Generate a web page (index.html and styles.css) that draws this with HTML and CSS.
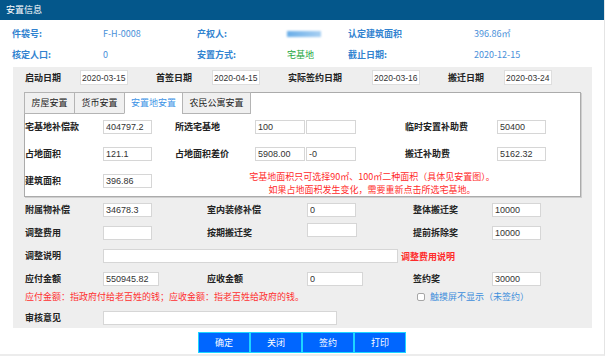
FILE: index.html
```html
<!DOCTYPE html>
<html lang="zh-CN">
<head>
    <meta charset="UTF-8">
    <meta name="viewport" content="width=device-width, initial-scale=1.0">
    <title>安置信息</title>
    <link rel="stylesheet" href="styles.css">
</head>
<body>
<div class="page">
    <div class="title-bar">安置信息</div>

    <div class="info">
        <span class="label">件袋号:</span>
        <span>F-H-0008</span>
        <span class="label">产权人:</span>
        <span><span class="blur"></span></span>
        <span class="label">认定建筑面积</span>
        <span>396.86㎡</span>

        <span class="label">核定人口:</span>
        <span>0</span>
        <span class="label">安置方式:</span>
        <span class="green">宅基地</span>
        <span class="label">截止日期:</span>
        <span>2020-12-15</span>
    </div>

    <div class="panel">
        <div class="dates">
            <label>启动日期</label>
            <input type="text" value="2020-03-15">
            <label>首签日期</label>
            <input type="text" value="2020-04-15">
            <label>实际签约日期</label>
            <input type="text" value="2020-03-16">
            <label>搬迁日期</label>
            <input type="text" value="2020-03-24">
        </div>

        <div class="tabbox">
            <div class="tabs">
                <div class="tab">房屋安置</div>
                <div class="tab">货币安置</div>
                <div class="tab active">安置地安置</div>
                <div class="tab wide">农民公寓安置</div>
            </div>
            <div class="tab-body">
                <label>宅基地补偿款</label>
                <input type="text" value="404797.2">
                <label>所选宅基地</label>
                <div class="pair">
                    <input type="text" value="100">
                    <input type="text" value="">
                </div>
                <label>临时安置补助费</label>
                <input type="text" value="50400">

                <label>占地面积</label>
                <input type="text" value="121.1">
                <label>占地面积差价</label>
                <div class="pair">
                    <input type="text" value="5908.00">
                    <input type="text" value="-0">
                </div>
                <label>搬迁补助费</label>
                <input type="text" value="5162.32">

                <label>建筑面积</label>
                <input type="text" value="396.86">
                <div class="tip">宅基地面积只可选择90㎡、100㎡二种面积（具体见安置图）。<br>如果占地面积发生变化，需要重新点击所选宅基地。</div>
            </div>
        </div>

        <div class="fees">
            <label>附属物补偿</label>
            <input type="text" value="34678.3">
            <label>室内装修补偿</label>
            <input type="text" value="0">
            <label>整体搬迁奖</label>
            <input type="text" value="10000">

            <label>调整费用</label>
            <input type="text" value="">
            <label>按期搬迁奖</label>
            <input type="text" class="raised" value="">
            <label>提前拆除奖</label>
            <input type="text" value="10000">

            <label>调整说明</label>
            <div class="span-rest">
                <input type="text" class="long" value="">
                <span class="red">调整费用说明</span>
            </div>

            <label>应付金额</label>
            <input type="text" class="mid" value="550945.82">
            <label>应收金额</label>
            <input type="text" class="mid" value="0">
            <label>签约奖</label>
            <input type="text" value="30000">
        </div>

        <div class="note-row">
            <span class="red">应付金额：指政府付给老百姓的钱；应收金额：指老百姓给政府的钱。</span>
            <label class="check"><input type="checkbox">触摸屏不显示（未签约）</label>
        </div>

        <div class="review">
            <label>审核意见</label>
            <input type="text" value="">
        </div>
    </div>

    <div class="actions">
        <button class="btn">确定</button>
        <button class="btn">关闭</button>
        <button class="btn">签约</button>
        <button class="btn">打印</button>
    </div>
</div>
</body>
</html>
```

FILE: styles.css
```css
body {
    margin: 0;
    font-family: "Noto Sans CJK SC", "Liberation Sans", sans-serif;
    font-size: 9px;
    color: #222;
    background: #fff;
}
.page {
    width: 604px;
    height: 354px;
    border-right: 1px solid #e4e4e4;
    border-bottom: 2px solid #ececec;
}
.title-bar {
    height: 20px;
    line-height: 20px;
    padding-left: 6px;
    background: #04578b;
    color: #fff;
}
.info {
    display: grid;
    grid-template-columns: 91px 94px 90px 61px 126px auto;
    grid-auto-rows: 21px;
    align-items: center;
    padding: 3px 0 0 12px;
    color: #4a90d9;
}
.info .label {
    font-weight: bold;
    color: #3283d0;
}
.info .green {
    color: #23a63c;
}
.blur {
    display: inline-block;
    width: 34px;
    height: 6px;
    margin-top: 2px;
    background: linear-gradient(90deg, #6aaee8, #a8d0f2);
    filter: blur(1px);
}
.panel {
    box-sizing: border-box;
    width: 579px;
    height: 261px;
    margin: 2px 0 0 13px;
    padding: 3px 0 0 12px;
    background: #eeeeee;
}
label {
    font-weight: bold;
    line-height: 14px;
    white-space: nowrap;
}
input[type="text"] {
    box-sizing: border-box;
    width: 49px;
    height: 14px;
    margin: 0;
    padding: 0 2px;
    border: 1px solid #d6d6d6;
    background: #fff;
    font-family: "Liberation Sans", Arial, sans-serif;
    font-size: 9px;
    color: #333;
    outline: none;
}
.dates {
    display: grid;
    grid-template-columns: 55px 76px 56px 76px 84px 76px 56px 48px;
    align-items: center;
}
.dates input[type="text"] {
    width: 48px;
    height: 15px;
    padding: 0 0 0 1px;
    border-color: #dedede;
    font-size: 8.5px;
}
.tabbox {
    box-sizing: border-box;
    width: 557px;
    margin: 7px 0 0 -1px;
    background: #fff;
    border: 1px solid #ababab;
    box-shadow: 1px 1px 0 #cfcfcf;
}
.tabs {
    display: flex;
    margin: -1px 0 0 -1px;
}
.tab {
    box-sizing: border-box;
    width: 51px;
    height: 22px;
    line-height: 20px;
    text-align: center;
    border: 1px solid #b4b4b4;
    background: #f0f0f0;
    margin-right: -1px;
    color: #222;
}
.tab.active {
    width: 59px;
    background: #fff;
    color: #3d94e6;
    border-bottom-color: #fff;
}
.tab.wide {
    width: 69px;
}
.tab-body {
    display: grid;
    grid-template-columns: 78px 72px 80px 150px 92px 49px;
    row-gap: 13px;
    align-items: start;
    padding-top: 6px;
}
.pair {
    display: flex;
    gap: 1px;
}
.pair input[type="text"] {
    width: 50px;
}
.tip {
    grid-column: 3 / -1;
    margin-top: -4px;
    padding-left: 23px;
    line-height: 13px;
    text-align: center;
    color: #ff2a2a;
}
.fees {
    display: grid;
    grid-template-columns: 78px 104px 100px 106px 79px 49px;
    grid-auto-rows: 14px;
    row-gap: 9px;
    align-items: center;
    margin-top: 6px;
}
.fees input.raised {
    width: 50px;
    margin-top: -6px;
}
.fees input.mid {
    width: 56px;
}
.span-rest {
    grid-column: 2 / -1;
    display: flex;
    align-items: center;
    gap: 3px;
}
.fees input.long {
    width: 295px;
}
.red {
    color: #ff2a2a;
    font-weight: bold;
}
.note-row {
    display: grid;
    grid-template-columns: 392px auto;
    align-items: center;
    margin-top: 4px;
    line-height: 14px;
}
.note-row .red {
    font-weight: normal;
    color: #ff3030;
}
.check {
    display: flex;
    align-items: center;
    font-weight: normal;
    color: #3f8fdc;
}
.check input {
    appearance: none;
    width: 8px;
    height: 8px;
    margin: 0 5px 0 0;
    border: 1px solid #a6a6a6;
    border-radius: 2px;
    background: #fff;
}
.review {
    display: grid;
    grid-template-columns: 78px auto;
    align-items: center;
    margin-top: 7px;
}
.review input[type="text"] {
    width: 234px;
}
.actions {
    display: flex;
    padding-left: 198px;
    margin-top: 4px;
}
.btn {
    width: 52px;
    height: 21px;
    margin: 0;
    padding: 0;
    border: 1px solid #1ed6ff;
    background: #0066ff;
    color: #fff;
    font-family: "Noto Sans CJK SC", sans-serif;
    font-size: 9px;
    cursor: pointer;
}
```
